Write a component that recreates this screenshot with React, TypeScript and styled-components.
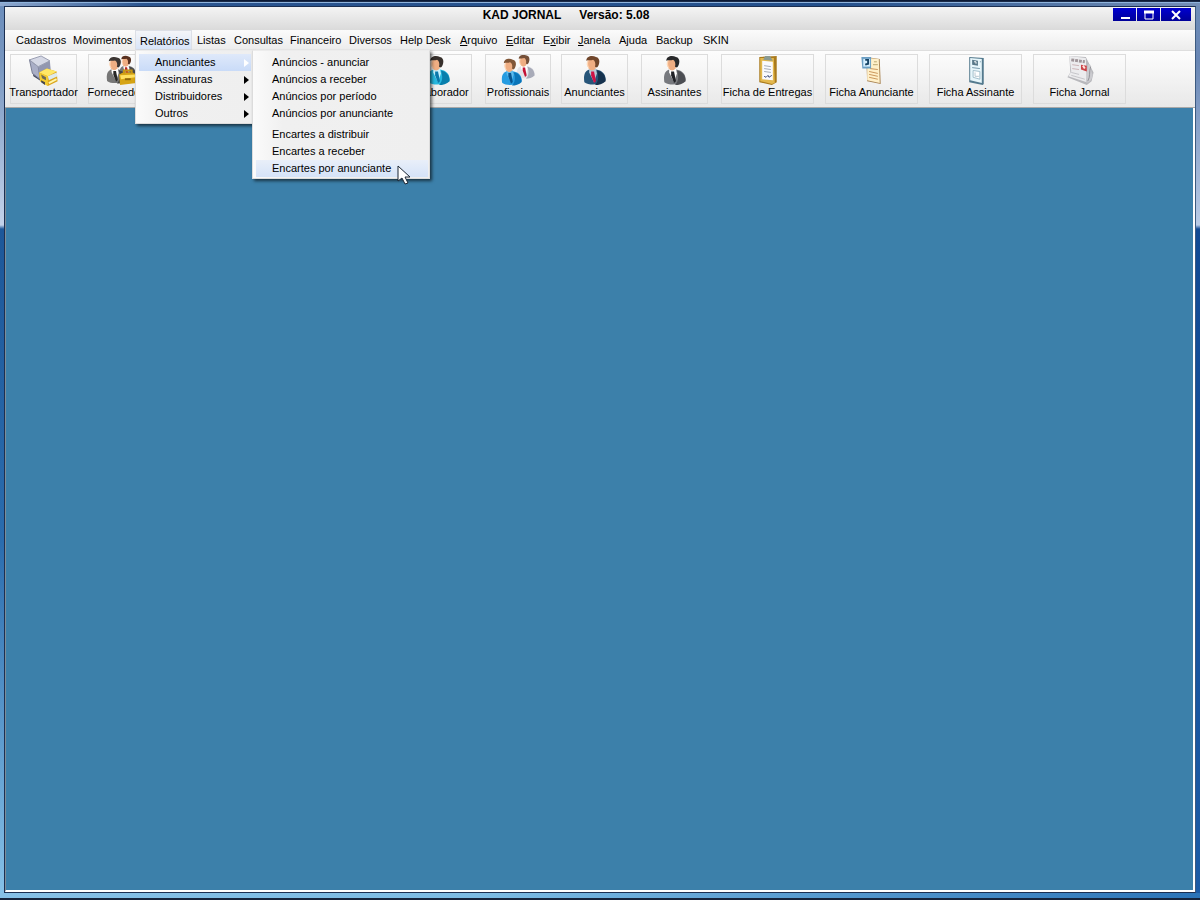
import React from "react";
import styled, { createGlobalStyle } from "styled-components";

const GlobalStyle = createGlobalStyle`
  * { box-sizing: border-box; }
  body {
    margin: 0;
    font-family: "Liberation Sans", Arial, sans-serif;
    font-size: 11px;
    line-height: 17px;
    color: #000;
  }
  button { font: inherit; color: inherit; padding: 0; margin: 0; }
`;

const Frame = styled.div`
  min-height: 100vh;
  display: flex;
  padding: 6px 4px 7px;
  background:
    linear-gradient(#0b1a36 0 1px, #1c2b48 1px 2px, #8fb4dd 2px 3px, transparent 3px) top / 100% 3px no-repeat,
    linear-gradient(90deg, #8fa9cf, #2b5590 12%, #24508c 70%, #7590b8) 0 3px / 100% 3px no-repeat,
    linear-gradient(#16243c, #16243c) bottom / 100% 2px no-repeat,
    linear-gradient(90deg, #86c0e6, #7dbce4 40%, #2c74b8) 0 100% / 100% 7px no-repeat,
    linear-gradient(#6b8dbb, #7796c0 60px, #c3d2ea 225px, #1d5799 229px, #2a6cae 60%, #88c2e8) left / 4px 100% no-repeat,
    linear-gradient(#6f8db8, #6886b4 60px, #b9cbe6 225px, #124a94 229px, #1d5ca6) right / 4px 100% no-repeat;
`;

const AppWindow = styled.div`
  flex: 1;
  min-width: 0;
  display: flex;
  flex-direction: column;
  border: 1px solid #1b2f52;
  border-right-color: #3c5a80;
`;

const TitleBar = styled.header`
  display: flex;
  align-items: flex-start;
  height: 23px;
  padding: 1px 4px 0 14px;
  background: linear-gradient(#f4f4f4, #dadada);
`;

const Title = styled.h1`
  flex: 1;
  display: flex;
  justify-content: center;
  gap: 18px;
  margin: 0;
  font-size: 12px;
  line-height: 14px;
  font-weight: bold;
`;

const Controls = styled.div`
  display: flex;
  gap: 1px;
`;

const ControlButton = styled.button<{ $wide?: boolean }>`
  display: grid;
  place-items: center;
  width: ${(p) => (p.$wide ? 30 : 23)}px;
  height: 13px;
  border: 0;
  background: linear-gradient(#0000d0, #000098);
`;

const MenuBar = styled.nav`
  display: grid;
  grid-template-columns: 57px 67px 57px 37px 56px 59px 51px 60px 46px 37px 35px 41px 37px 47px 36px;
  height: 21px;
  padding-left: 6px;
  background: linear-gradient(#fbfbfb, #ececec);
  border-bottom: 1px solid #dedede;
`;

const MenuSlot = styled.div`
  position: relative;
  display: flex;
`;

const MenuButton = styled.button<{ $open?: boolean }>`
  display: flex;
  flex: 1;
  height: 20px;
  padding: ${(p) => (p.$open ? "2px 0 0 4px" : "2px 0 0 5px")};
  border: ${(p) => (p.$open ? "1px solid #dcdfe6" : "0")};
  background: ${(p) => (p.$open ? "linear-gradient(#f4f5f8, #d9e5f9)" : "transparent")};
  text-align: left;
  line-height: 16px;
  white-space: nowrap;
`;

const Popup = styled.div<{ $width: number }>`
  position: absolute;
  z-index: 2;
  top: 100%;
  left: 0;
  width: ${(p) => p.$width}px;
  padding: 3px 1px 1px 3px;
  background: linear-gradient(90deg, #fbfbfb, #f0f0f0 30px, #efefef);
  border: 1px solid #dcdcdc;
  border-top-color: #ececec;
  box-shadow: 2px 2px 3px rgba(0, 0, 0, 0.6);
`;

const SubPopup = styled(Popup)`
  top: -1px;
  left: 100%;
`;

const MenuItem = styled.button<{ $active?: boolean }>`
  display: flex;
  align-items: center;
  justify-content: space-between;
  width: 100%;
  height: 17px;
  padding: 0 2px 0 16px;
  border: 0;
  background: ${(p) => (p.$active ? "linear-gradient(#dfe9fa, #c9dbf8)" : "transparent")};
  text-align: left;
  white-space: nowrap;
`;

const SubItem = styled(MenuItem)`
  background: ${(p) => (p.$active ? "linear-gradient(#e9eff9, #d5e3f8)" : "transparent")};
`;

const Separator = styled.hr`
  height: 4px;
  margin: 0;
  border: 0;
`;

const Arrow = styled.svg<{ $light?: boolean }>`
  width: 5px;
  height: 8px;
  fill: ${(p) => (p.$light ? "#fff" : "#000")};
`;

const Pointer = styled.svg`
  position: absolute;
  right: 18px;
  bottom: -7px;
  width: 15px;
  height: 20px;
`;

const ToolBar = styled.div`
  display: grid;
  grid-template-columns:
    [c1] 67px 11px [c2] 67px 250px [c3] 67px 13px [c4] 66px 10px [c5] 67px 13px
    [c6] 67px 13px [c7] 93px 11px [c8] 93px 11px [c9] 93px 11px [c10] 93px;
  height: 57px;
  padding: 3px 5px 3px;
  background: linear-gradient(#fdfdfd, #e8e8e8);
  border-bottom: 1px solid #a8a8a8;
`;

const ToolButton = styled.button<{ $slot: number }>`
  grid-column: c${(p) => p.$slot};
  display: flex;
  flex-direction: column;
  align-items: center;
  justify-content: flex-start;
  height: 50px;
  border: 1px solid #dcdcdc;
  background: transparent;
  line-height: 12px;
  white-space: nowrap;

  svg { width: 34px; height: 31px; flex: none; }
`;

const Workspace = styled.main`
  flex: 1;
  background: #3c80aa;
  border: solid #fff;
  border-width: 0 2px 2px 1px;
  border-left-color: #7d8c98;
`;

type PersonProps = { suit: string; shade: string; hair: string; tie: string; shirt?: string };

function Person({ suit, shade, hair, tie, shirt = "#fff" }: PersonProps) {
  return (
    <g>
      <path d="M5 28c-1-7 0-11 5-13h7c6 1 10 4 10 11-5 5-17 6-22 2z" fill={suit} />
      <path d="M18 16c5 1 9 4 9 11-3 3-7 4-11 4 4-4 4-9 2-15z" fill={shade} />
      <path d="M10 14h7l1 5-3 9-5-10z" fill={shirt} />
      <path d="M12 17h3l2 10-2 2-3-8z" fill={tie} />
      <ellipse cx="13" cy="9" rx="5" ry="7" fill="#efae83" />
      <path d="M10 5c-2 3-1 8 1 9-4-1-5-7-1-9z" fill="#ffd8b7" />
      <path d="M7 6c0-5 6-6 10-4 5 1 4 8 1 11l-2-1c1-3 0-6-2-7-2 1-5 0-7 1z" fill={hair} />
    </g>
  );
}

const icons = {
  truck: (
    <svg viewBox="0 0 32 32">
      <path d="m4 17 9 5v5l-8-5z" fill="#454a60" />
      <path d="m1 5 9 7 2 13-8-6z" fill="#a9aec6" stroke="#777c93" />
      <path d="m10 12 12-6 1 10-11 8z" fill="#9297b0" />
      <path d="m1 5 12-4 9 5-12 6z" fill="#d5d8e5" stroke="#979cb0" />
      <path d="m11 18 8-4 10 3 1 10-10 5-8-5z" fill="#dba51b" />
      <path d="m11 18 8-4 10 3-9 5z" fill="#ffe766" />
      <path d="m11 18 9 4v10l-8-5z" fill="#f3cb30" />
      <path d="m13 20 5 3v3l-4-2z" fill="#6c6a58" />
      <path d="m20 22 9-4 1 4-9 4z" fill="#dde9ec" />
      <path d="m21 29 8-4" stroke="#fff6ad" strokeWidth="2" />
      <path d="m13 26 4 2v3l-4-3z" fill="#46464a" />
    </svg>
  ),
  suppliers: (
    <svg viewBox="0 0 32 32">
      <g transform="translate(10 0) scale(.75)"><Person suit="#777" shade="#4b4b4b" hair="#59311f" tie="#b92525" /></g>
      <g transform="translate(-4 1) scale(.92)"><Person suit="#777" shade="#444" hair="#3c3633" tie="#272727" /></g>
      <path d="m13 20 4-2h10l4 2v9l-17 2z" fill="#d6a414" />
      <path d="m14 21 16-1v3l-15 2z" fill="#ffe060" />
      <path d="M18 19v-3h8v3" fill="none" stroke="#c79614" strokeWidth="2" />
      <path d="M19 25h6" stroke="#8f670a" strokeWidth="2" />
    </svg>
  ),
  collaborator: <svg viewBox="0 0 32 32"><Person suit="#27b8df" shade="#087fac" hair="#37302c" tie="#0b78aa" shirt="#c7f2ff" /></svg>,
  professionals: (
    <svg viewBox="0 0 32 32">
      <g transform="translate(11 -1) scale(.82)"><Person suit="#e2e2e7" shade="#a8abb8" hair="#755039" tie="#c41135" /></g>
      <g transform="translate(-5 3) scale(.92)"><Person suit="#269ce1" shade="#0a75b9" hair="#805637" tie="#075691" shirt="#5dbbee" /></g>
    </svg>
  ),
  advertiser: <svg viewBox="0 0 32 32"><Person suit="#275579" shade="#16324e" hair="#70462b" tie="#cf1246" shirt="#b9c8d6" /></svg>,
  subscriber: <svg viewBox="0 0 32 32"><Person suit="#77797e" shade="#4c4e53" hair="#28292b" tie="#202126" /></svg>,
  clipboard: (
    <svg viewBox="0 0 32 32">
      <path d="m7 2 18-1v27l-5 3-13-3z" fill="#a97a1d" />
      <path d="m8 3 14 0 1 26-3 1-12-3z" fill="#e3b84e" />
      <path d="m10 6 11 1v19l-11-1z" fill="#f9faff" />
      <path d="m11 5 2-4h5l3 5z" fill="#8a9a91" />
      <path d="m12 11 7 1m-7 2 7 1m-7 2 7 1" stroke="#a2a9b5" />
      <path d="m12 22 2 1 2-2 1 2 3-2" fill="none" stroke="#404c78" />
    </svg>
  ),
  advertiserCard: (
    <svg viewBox="0 0 32 32">
      <path d="m10 2 14 2 1 26-14-3z" fill="#a98453" />
      <path d="m11 3 12 1 1 25-13-3z" fill="#fff0c9" />
      <path d="m14 14 8 1m-9 2 9 2m-9 1 9 2m-9 1 9 2" stroke="#c99559" />
      <path d="M5 2h10v12H6z" fill="#6b9fc4" />
      <path d="M7 4h7v8H7z" fill="#d6efff" />
      <path d="M9 5h3v4l-3 1" fill="none" stroke="#174466" strokeWidth="2" />
      <path d="M18 7h3M17 10h5" stroke="#b9a46e" />
    </svg>
  ),
  subscriberCard: (
    <svg viewBox="0 0 32 32">
      <path d="m9 2 15 1v27l-1 1-14-3z" fill="#547a8e" />
      <path d="m10 3 12 1v25l-12-3z" fill="#e7f6fb" />
      <path d="m12 5 6 1v5l-6-1z" fill="#59798a" />
      <path d="M14 7h2v2" stroke="#fff" fill="none" />
      <path d="m20 7 1 0m-9 6 8 1" stroke="#7698aa" />
      <path d="m13 16 7 1v8l-7-2z" fill="#fff" stroke="#a0bdca" />
      <path d="M15 18v4h4" stroke="#b5c5ce" fill="none" />
    </svg>
  ),
  newspaper: (
    <svg viewBox="0 0 32 32">
      <path d="m5 1 17 1 8 16-2 9-5 4-20-8 3-5z" fill="#b8b8bc" />
      <path d="m5 1 17 2 1 25-19-6 3-5z" fill="#ececee" />
      <path d="M24 10c5-2 2 5 5 10 0 6-6 11-7 7z" fill="#cbcbcf" />
      <path d="M27 12c-2 6 0 10-3 15" stroke="#929298" fill="none" />
      <path d="m7 5 14 2" stroke="#a0969a" strokeWidth="3" strokeDasharray="3 1" />
      <path d="m8 10 7 1m-7 3 7 1" stroke="#cbb3b6" />
      <path d="m17 10 6 1v6l-6-2z" fill="#cb4247" />
      <path d="m19 11 2 3" stroke="#ffe3dc" strokeWidth="2" />
      <path d="m7 18 8 2m-8 1 14 4" stroke="#c4c4c8" />
    </svg>
  ),
};

const tools: { slot: number; label: string; icon: keyof typeof icons }[] = [
  { slot: 1, label: "Transportador", icon: "truck" },
  { slot: 2, label: "Fornecedores", icon: "suppliers" },
  { slot: 3, label: "Colaborador", icon: "collaborator" },
  { slot: 4, label: "Profissionais", icon: "professionals" },
  { slot: 5, label: "Anunciantes", icon: "advertiser" },
  { slot: 6, label: "Assinantes", icon: "subscriber" },
  { slot: 7, label: "Ficha de Entregas", icon: "clipboard" },
  { slot: 8, label: "Ficha Anunciante", icon: "advertiserCard" },
  { slot: 9, label: "Ficha Assinante", icon: "subscriberCard" },
  { slot: 10, label: "Ficha Jornal", icon: "newspaper" },
];

const menus: { label: string; key?: number }[] = [
  { label: "Cadastros" },
  { label: "Movimentos" },
  { label: "Relatórios" },
  { label: "Listas" },
  { label: "Consultas" },
  { label: "Financeiro" },
  { label: "Diversos" },
  { label: "Help Desk" },
  { label: "Arquivo", key: 0 },
  { label: "Editar", key: 0 },
  { label: "Exibir", key: 1 },
  { label: "Janela", key: 0 },
  { label: "Ajuda" },
  { label: "Backup" },
  { label: "SKIN" },
];

const reports = ["Anunciantes", "Assinaturas", "Distribuidores", "Outros"];
const ads = ["Anúncios - anunciar", "Anúncios a receber", "Anúncios por período", "Anúncios por anunciante"];
const inserts = ["Encartes a distribuir", "Encartes a receber", "Encartes por anunciante"];

function MenuLabel({ label, accessKey }: { label: string; accessKey?: number }) {
  if (accessKey === undefined) return <span>{label}</span>;
  return (
    <span>
      {label.slice(0, accessKey)}
      <u>{label[accessKey]}</u>
      {label.slice(accessKey + 1)}
    </span>
  );
}

function ReportsMenu() {
  return (
    <Popup $width={118} role="menu" aria-label="Relatórios">
      {reports.map((label, i) => (
        <MenuItem key={label} role="menuitem" $active={i === 0}>
          {label}
          <Arrow $light={i === 0} viewBox="0 0 5 8"><path d="M0 0v8l5-4z" /></Arrow>
        </MenuItem>
      ))}
      <SubPopup $width={178} role="menu" aria-label="Anunciantes">
        {ads.map((label) => <SubItem key={label} role="menuitem">{label}</SubItem>)}
        <Separator />
        {inserts.map((label, i) => <SubItem key={label} role="menuitem" $active={i === 2}>{label}</SubItem>)}
        <Pointer viewBox="0 0 15 20">
          <path d="M2 1v15l4-3 3 6 3-1-3-6h5z" fill="#fff" stroke="#1a2533" />
        </Pointer>
      </SubPopup>
    </Popup>
  );
}

export default function App() {
  return (
    <>
      <GlobalStyle />
      <Frame>
        <AppWindow>
          <TitleBar>
            <Title><span>KAD JORNAL</span><span>Versão: 5.08</span></Title>
            <Controls>
              <ControlButton aria-label="Minimizar">
                <svg width="10" height="10" viewBox="0 0 10 10"><path d="M1 8h9" stroke="#fff" strokeWidth="2" /></svg>
              </ControlButton>
              <ControlButton aria-label="Maximizar">
                <svg width="10" height="10" viewBox="0 0 10 10"><path d="M1 2h8v7H1z" fill="none" stroke="#fff" /><path d="M0 2h10" stroke="#fff" strokeWidth="3" /></svg>
              </ControlButton>
              <ControlButton aria-label="Fechar" $wide>
                <svg width="10" height="10" viewBox="0 0 10 10"><path d="m1 1 8 8m0-8L1 9" stroke="#fff" strokeWidth="2" /></svg>
              </ControlButton>
            </Controls>
          </TitleBar>
          <MenuBar aria-label="Menu principal">
            {menus.map(({ label, key }) => (
              <MenuSlot key={label}>
                <MenuButton $open={label === "Relatórios"}><MenuLabel label={label} accessKey={key} /></MenuButton>
                {label === "Relatórios" && <ReportsMenu />}
              </MenuSlot>
            ))}
          </MenuBar>
          <ToolBar role="toolbar">
            {tools.map(({ slot, label, icon }) => (
              <ToolButton key={label} $slot={slot}>{icons[icon]}{label}</ToolButton>
            ))}
          </ToolBar>
          <Workspace />
        </AppWindow>
      </Frame>
    </>
  );
}
